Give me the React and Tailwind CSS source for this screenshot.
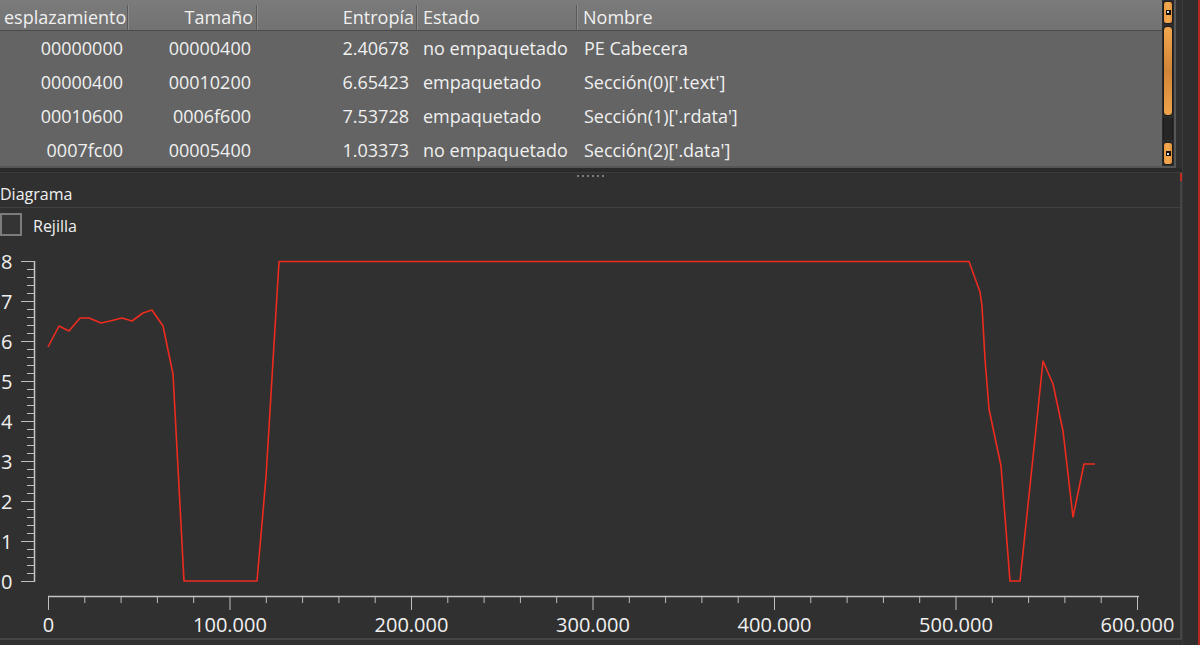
import React from 'react';

const rows = [
  ['00000000', '00000400', '2.40678', 'no empaquetado', 'PE Cabecera'],
  ['00000400', '00010200', '6.65423', 'empaquetado', "Sección(0)['.text']"],
  ['00010600', '0006f600', '7.53728', 'empaquetado', "Sección(1)['.rdata']"],
  ['0007fc00', '00005400', '1.03373', 'no empaquetado', "Sección(2)['.data']"],
];

// entropy curve, already in screen pixels
const curve = [
  [48, 348], [59, 327], [69, 332], [80, 319], [89, 319], [101, 324], [110, 322],
  [122, 319], [132, 322], [143, 314], [152, 311], [163, 327], [173, 375], [177, 450],
  [184, 582], [257, 582], [266, 478], [279, 262.5], [969, 262.5], [980, 293],
  [982, 307], [985, 360], [989, 410], [1001, 467], [1010, 582], [1020, 582],
  [1032, 468], [1043, 362], [1053, 385], [1063, 432], [1073, 518], [1084, 465],
  [1095, 465],
];

function ScrollButton() {
  return (
    <div className="h-[23px] mx-[1px] rounded-[3px] border border-[#1c1c1c] bg-linear-to-r from-[#e9993f] via-[#f3aa52] to-[#e39339] flex items-center justify-center">
      <div className="w-[5px] h-[5px] bg-[#111] flex items-center justify-center">
        <div className="w-[2px] h-[2px] bg-[#ddd]" />
      </div>
    </div>
  );
}

function Scrollbar() {
  return (
    <div className="w-[12px] bg-[#2c2c2c] flex flex-col py-[1px] gap-[2px]">
      <ScrollButton />
      <div className="h-[91px] mx-[1px] rounded-[4px] border border-[#1c1c1c] bg-linear-to-b from-[#f2a64e] via-[#cf8536] to-[#f1a44c]" />
      <div className="h-[23px] mx-[1px] bg-[#262626] border-x border-[#1c1c1c]" />
      <ScrollButton />
    </div>
  );
}

function Chart() {
  const yTicks = [];
  for (let i = 0; i <= 40; i++) {
    const y = 262 + i * 8;
    const major = i % 5 === 0;
    yTicks.push(
      <line key={'y' + i} x1={major ? 21 : 27} x2={35} y1={y + 0.5} y2={y + 0.5} stroke="#bdbdbd" strokeWidth="1" />
    );
  }
  const xTicks = [];
  for (let i = 0; i <= 30; i++) {
    const x = 48.5 + i * 36.3;
    const major = i % 5 === 0;
    xTicks.push(
      <line key={'x' + i} x1={x} x2={x} y1={597} y2={major ? 611 : 604} stroke="#bdbdbd" strokeWidth="1" />
    );
  }
  const xLabels = ['0', '100.000', '200.000', '300.000', '400.000', '500.000', '600.000'];

  return (
    <svg width="1180" height="399" viewBox="0 240 1180 399" className="block">
      {yTicks}
      <line x1="34.5" x2="34.5" y1="262" y2="583" stroke="#c4c4c4" strokeWidth="1.5" />
      {[8, 7, 6, 5, 4, 3, 2, 1, 0].map((v) => (
        <text key={v} x="1" y={582 - v * 40 + 7.5} fontSize="20" fill="#f0f0f0">
          {v}
        </text>
      ))}
      {xTicks}
      <line x1="48" x2="1139" y1="597.5" y2="597.5" stroke="#c4c4c4" strokeWidth="1.5" />
      {xLabels.map((t, i) => (
        <text key={t} x={48.5 + i * 181.5} y="633" fontSize="20" fill="#f0f0f0" textAnchor="middle">
          {t}
        </text>
      ))}
      <polyline
        points={curve.map((p) => p.join(',')).join(' ')}
        fill="none"
        stroke="#ee2b1f"
        strokeWidth="1.6"
        strokeLinejoin="round"
      />
    </svg>
  );
}

export default function App() {
  return (
    <div className="w-[1200px] h-[645px] bg-[#303030] flex overflow-hidden font-['Open_Sans',sans-serif] text-[#f0f0f0]">
      <div className="w-[1182px] flex flex-col">
        {/* section table */}
        <div className="w-[1176px] h-[168px] flex border-r-2 border-b-2 border-[#565656]">
          <div className="w-[1162px] bg-[#646464] text-[18px] overflow-hidden">
            <div className="flex h-[31px] bg-linear-to-b from-[#7b7b7b] to-[#727272] border-b border-[#4c4c4c] leading-[24px] pt-[5px]">
              <div className="w-[128px] pl-[4px] border-r border-[#5a5a5a] whitespace-nowrap overflow-hidden">esplazamiento</div>
              <div className="w-[129px] pr-[3px] text-right border-r border-l border-[#5a5a5a] border-l-[#8a8a8a]">Tamaño</div>
              <div className="w-[160px] pr-[2px] text-right border-r border-l border-[#5a5a5a] border-l-[#8a8a8a]">Entropía</div>
              <div className="w-[160px] pl-[5px] border-r border-l border-[#5a5a5a] border-l-[#8a8a8a]">Estado</div>
              <div className="flex-1 pl-[5px] border-l border-[#8a8a8a]">Nombre</div>
            </div>
            {rows.map((r) => (
              <div key={r[0]} className="flex h-[34px] leading-[34px] whitespace-nowrap">
                <div className="w-[128px] pr-[5px] text-right">{r[0]}</div>
                <div className="w-[129px] pr-[6px] text-right">{r[1]}</div>
                <div className="w-[160px] pr-[8px] text-right">{r[2]}</div>
                <div className="w-[160px] pl-[6px]">{r[3]}</div>
                <div className="flex-1 pl-[7px]">{r[4]}</div>
              </div>
            ))}
          </div>
          <Scrollbar />
        </div>

        <div className="h-[4px] bg-[#2a2a2a]" />

        {/* Diagrama panel */}
        <div className="relative border-t border-[#3c3c3c] border-r-2 border-b-2 border-r-[#454545] border-b-[#454545]">
          <span className="absolute -right-[2px] top-0 w-[2px] h-[8px] bg-[#c22a22]" />
          <div className="h-[35px] pt-[2px] border-b border-[#414141]">
            <div className="flex justify-center gap-[3px]">
              {[0, 1, 2, 3, 4, 5].map((i) => (
                <span key={i} className="w-[2px] h-[2px] bg-[#7c7c7c]" />
              ))}
            </div>
            <div className="mt-[6px] text-[16px] leading-[22px]">Diagrama</div>
          </div>
          <div className="flex items-center gap-[11px] pt-[5px] pb-[3px] h-[31px]">
            <div className="w-[22px] h-[23px] border-2 border-[#7c7c7c] bg-[#343434]" />
            <span className="text-[16px] leading-[22px] mt-[2px]">Rejilla</span>
          </div>
          <Chart />
        </div>
      </div>
      <div className="flex-1 bg-[#2f2f2f] border-r-2 border-[#b52820] border-l border-l-[#3a3a3a]" />
    </div>
  );
}
